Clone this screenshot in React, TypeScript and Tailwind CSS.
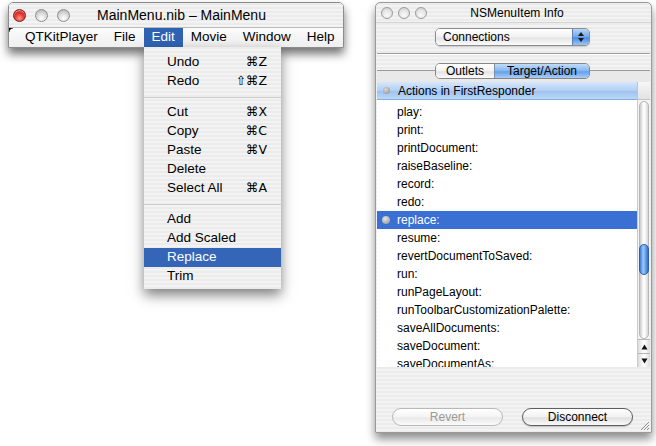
const stripes =
  "bg-[repeating-linear-gradient(to_bottom,#ebebeb_0px,#ebebeb_2px,#f3f3f3_2px,#f3f3f3_4px)]";

type MenuEntry = { label: string; key?: string; active?: boolean } | "sep";

const editItems: MenuEntry[] = [
  { label: "Undo", key: "⌘Z" },
  { label: "Redo", key: "⇧⌘Z" },
  "sep",
  { label: "Cut", key: "⌘X" },
  { label: "Copy", key: "⌘C" },
  { label: "Paste", key: "⌘V" },
  { label: "Delete" },
  { label: "Select All", key: "⌘A" },
  "sep",
  { label: "Add" },
  { label: "Add Scaled" },
  { label: "Replace", active: true },
  { label: "Trim" },
];

const actions = [
  "play:",
  "print:",
  "printDocument:",
  "raiseBaseline:",
  "record:",
  "redo:",
  "replace:",
  "resume:",
  "revertDocumentToSaved:",
  "run:",
  "runPageLayout:",
  "runToolbarCustomizationPalette:",
  "saveAllDocuments:",
  "saveDocument:",
  "saveDocumentAs:",
];

function Light({ kind }: { kind: "red" | "gray" | "off" }) {
  if (kind === "red")
    return (
      <div className="w-[13px] h-[13px] rounded-full border border-[#7c1c1c] bg-[radial-gradient(circle_at_50%_75%,#ff9a8c_0%,#e8352e_45%,#a31212_100%)] shadow-[inset_0_1px_1px_rgba(255,255,255,0.6)]" />
    );
  if (kind === "gray")
    return (
      <div className="w-[13px] h-[13px] rounded-full border border-[#8f8f8f] bg-[radial-gradient(circle_at_50%_75%,#ffffff_0%,#dadada_50%,#a9a9a9_100%)]" />
    );
  return (
    <div className="w-[12px] h-[12px] rounded-full border border-[#9b9b9b] bg-[radial-gradient(circle_at_50%_70%,#fafafa_0%,#e2e2e2_60%,#c4c4c4_100%)]" />
  );
}

function MainMenuWindow() {
  const menus = ["QTKitPlayer", "File", "Edit", "Movie", "Window", "Help"];
  return (
    <div className="absolute left-[8px] top-[2px] w-[336px] rounded-t-[5px] border border-[#8c8c8c] shadow-[0_6px_10px_rgba(0,0,0,0.55)] overflow-hidden">
      <div className={`flex items-center h-[24px] pl-[4px] ${stripes}`}>
        <div className="flex items-center gap-[9px]">
          <Light kind="red" />
          <Light kind="gray" />
          <Light kind="gray" />
        </div>
        <div className="flex-1 text-center pr-[50px] text-[14px] leading-none">
          MainMenu.nib – MainMenu
        </div>
      </div>
      <div className="relative flex h-[20px] pl-[8px] bg-[linear-gradient(to_bottom,#fbfbfb,#efefef)] border-t border-[#b9b9b9]">
        <div className="absolute left-0 top-0 w-[4px] h-[4px] bg-[radial-gradient(circle_at_100%_100%,transparent_3px,#000_4px)]" />
        {menus.map((m) => (
          <div
            key={m}
            className={`flex items-center px-[8px] text-[13.5px] ${
              m === "Edit" ? "bg-[#2f63b2] text-white" : "text-black"
            }`}
          >
            {m}
          </div>
        ))}
      </div>
    </div>
  );
}

function EditMenu() {
  return (
    <div
      className={`absolute left-[144px] top-[47px] w-[137px] pt-[6px] pb-[3px] ${stripes} bg-[#f2f2f2] shadow-[0_6px_12px_rgba(0,0,0,0.5)]`}
    >
      {editItems.map((it, i) =>
        it === "sep" ? (
          <div key={i} className="h-[12px] flex items-center">
            <div className="w-full h-px bg-[#cdcdcd]" />
          </div>
        ) : (
          <div
            key={i}
            className={`flex items-center justify-between h-[19px] pl-[23px] pr-[14px] text-[13.5px] ${
              it.active ? "bg-[#3565b6] text-white" : "text-black"
            }`}
          >
            <span>{it.label}</span>
            {it.key && (
              <span className="font-['DejaVu_Sans',sans-serif] text-[12.5px]">{it.key}</span>
            )}
          </div>
        )
      )}
    </div>
  );
}

function Scrollbar() {
  return (
    <div className="relative w-[13px] h-full flex flex-col bg-[#f4f4f4] border-l border-[#c9c9c9]">
      <div className="flex-1 mt-[1px] mx-[1px] rounded-t-full rounded-b-full bg-[linear-gradient(to_right,#c9c9c9,#f7f7f7_35%,#ffffff_55%,#d6d6d6)] border border-[#b5b5b5]" />
      <div className="h-[14px] flex items-center justify-center border-t border-[#b5b5b5] bg-[linear-gradient(to_right,#dcdcdc,#ffffff,#dcdcdc)]">
        <svg width="7" height="6" viewBox="0 0 7 6">
          <path d="M3.5 0.5 L6.5 5.5 L0.5 5.5 Z" fill="#111" />
        </svg>
      </div>
      <div className="h-[14px] flex items-center justify-center border-t border-[#b5b5b5] bg-[linear-gradient(to_right,#dcdcdc,#ffffff,#dcdcdc)]">
        <svg width="7" height="6" viewBox="0 0 7 6">
          <path d="M0.5 0.5 L6.5 0.5 L3.5 5.5 Z" fill="#111" />
        </svg>
      </div>
      <div className="absolute left-[1px] top-[144px] w-[10px] h-[31px] rounded-full border border-[#2b5fae] bg-[linear-gradient(to_right,#3b78d6,#9fc7f5_40%,#7ab0ef_60%,#2f6dd0)]" />
    </div>
  );
}

function InfoWindow() {
  return (
    <div
      className={`absolute left-[375px] top-[2px] w-[277px] h-[431px] rounded-t-[5px] border border-[#9a9a9a] ${stripes} shadow-[0_6px_10px_rgba(0,0,0,0.45)] flex flex-col`}
    >
      <div className="relative flex items-center h-[20px] pl-[5px] border-b border-[#d4d4d4]">
        <div className="flex items-center gap-[5px]">
          <Light kind="off" />
          <Light kind="off" />
          <Light kind="off" />
        </div>
        <div className="flex-1 text-center pr-[44px] text-[12px] leading-none text-black">
          NSMenuItem Info
        </div>
      </div>

      <div className="ml-[59px] mt-[5px] w-[155px] h-[18px] flex rounded-[5px] border border-[#8d8d8d] overflow-hidden shadow-[0_1px_1px_rgba(0,0,0,0.15)]">
        <div className="flex-1 flex items-center pl-[7px] text-[12px] bg-[linear-gradient(to_bottom,#ffffff,#f1f1f1_50%,#e4e4e4_55%,#fafafa)]">
          Connections
        </div>
        <div className="w-[17px] flex flex-col items-center justify-center gap-[2px] border-l border-[#5b7fb8] bg-[linear-gradient(to_bottom,#b8d6f8,#6ea6ea_50%,#4b8ce2_55%,#9cc6f4)]">
          <svg width="6" height="4" viewBox="0 0 6 4">
            <path d="M3 0 L6 4 L0 4 Z" fill="#1a1a1a" />
          </svg>
          <svg width="6" height="4" viewBox="0 0 6 4">
            <path d="M0 0 L6 0 L3 4 Z" fill="#1a1a1a" />
          </svg>
        </div>
      </div>

      <div className="mt-[7px] mx-[1px] h-px bg-[#9e9e9e]" />
      <div className="mx-[1px] h-px bg-white" />

      <div className="relative z-10 mt-[8px] ml-[59px] w-[155px] h-[16px] flex rounded-[5px] border border-[#868686] overflow-hidden text-[12px]">
        <div className="w-[59px] flex items-center justify-center border-r border-[#7a8fb0] bg-[linear-gradient(to_bottom,#ffffff,#f2f2f2_50%,#e3e3e3_55%,#fbfbfb)]">
          Outlets
        </div>
        <div className="flex-1 flex items-center justify-center bg-[linear-gradient(to_bottom,#c2dcf9,#84b5ef_50%,#64a0eb_55%,#a9cff6)]">
          Target/Action
        </div>
      </div>

      <div className="-mt-[9px] mx-[1px] flex flex-col border-t border-[#9a9a9a] bg-[#e9e9e9]">
        <div className="h-[11px]" />
        <div className="flex h-[18px]">
          <div className="flex-1 flex items-center bg-[linear-gradient(to_bottom,#d6e7fb,#b2d0f4_50%,#9ec3f0_55%,#bcd7f7)] border-b border-[#86ade0]">
            <div className="ml-[6px] w-[7px] h-[7px] rounded-full bg-[radial-gradient(circle_at_40%_35%,#d8d8d8,#8a8a8a)]" />
            <span className="ml-[8px] text-[12px]">Actions in FirstResponder</span>
          </div>
          <div className="w-[13px] bg-[linear-gradient(to_bottom,#f7f7f7,#e2e2e2)] border-l border-b border-[#c4c4c4]" />
        </div>
        <div className="flex h-[267px]">
          <div className="flex-1 bg-white pt-[3px] overflow-hidden">
            {actions.map((a) => {
              const sel = a === "replace:";
              return (
                <div
                  key={a}
                  className={`flex items-center h-[18px] text-[12px] ${
                    sel ? "bg-[#3a6fd3] text-white" : "text-black"
                  }`}
                >
                  <div className="w-[20px] flex justify-center">
                    {sel && (
                      <div className="ml-[-2px] w-[8px] h-[8px] rounded-full bg-[radial-gradient(circle_at_40%_35%,#e6e6e6,#8c8c8c)]" />
                    )}
                  </div>
                  <span>{a}</span>
                </div>
              );
            })}
          </div>
          <Scrollbar />
        </div>
      </div>

      <div className="mt-[41px] flex gap-[19px] pl-[16px] text-[12px]">
        <div className="w-[111px] h-[18px] flex items-center justify-center rounded-full border border-[#b9b9b9] text-[#9a9a9a] bg-[linear-gradient(to_bottom,#ffffff,#f4f4f4_50%,#e9e9e9_55%,#fbfbfb)]">
          Revert
        </div>
        <div className="w-[111px] h-[18px] flex items-center justify-center rounded-full border border-[#5e5e5e] text-black bg-[linear-gradient(to_bottom,#ffffff,#f1f1f1_50%,#e0e0e0_55%,#fafafa)] shadow-[0_1px_1px_rgba(0,0,0,0.2)]">
          Disconnect
        </div>
      </div>

      <svg
        className="absolute right-[1px] bottom-[1px]"
        width="11"
        height="11"
        viewBox="0 0 11 11"
      >
        <path d="M10 2 L2 10 M10 5 L5 10 M10 8 L8 10" stroke="#8a8a8a" strokeWidth="1" />
        <path d="M10.8 2.8 L2.8 10.8 M10.8 5.8 L5.8 10.8" stroke="#ffffff" strokeWidth="0.8" />
      </svg>
    </div>
  );
}

export default function App() {
  return (
    <div className="relative w-[656px] h-[446px] overflow-hidden bg-white font-['Liberation_Sans',Arial,sans-serif] text-black">
      <MainMenuWindow />
      <EditMenu />
      <InfoWindow />
    </div>
  );
}
